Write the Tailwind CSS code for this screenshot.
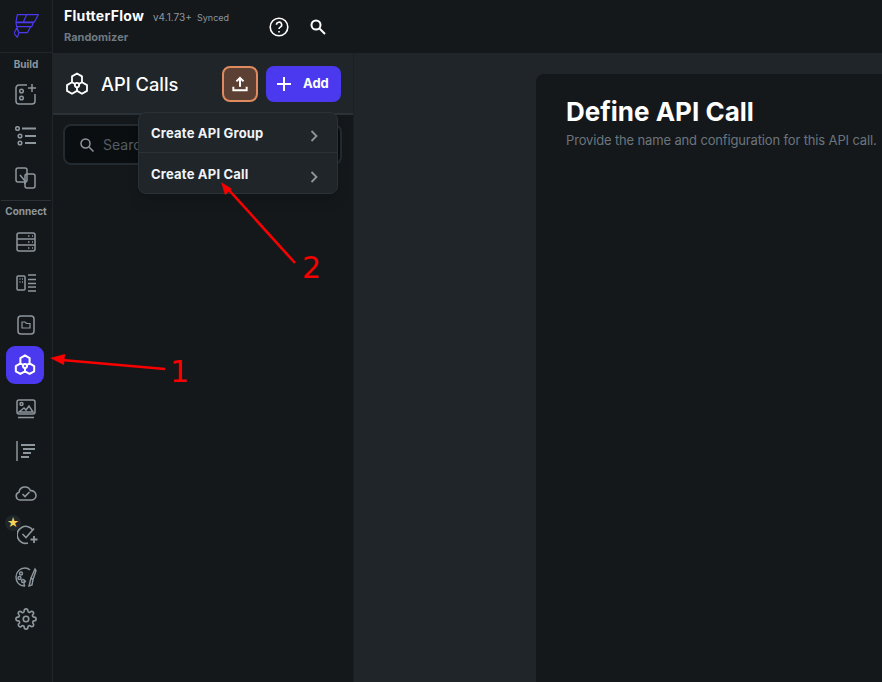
<!DOCTYPE html>
<html lang="en">
<head>
    <meta charset="UTF-8">
    <title>FlutterFlow - API Calls</title>
    <script src="https://cdn.jsdelivr.net/npm/@tailwindcss/browser@4"></script>
</head>
<body class="relative w-[882px] h-[682px] overflow-hidden bg-[#1f2528] text-white font-['Inter','Liberation_Sans',sans-serif]">
    <div class="flex h-full">
        <!-- Icon rail -->
        <aside class="w-[53px] shrink-0 h-full flex flex-col bg-[#14181b] border-r border-[#1f2528] text-[#8d979e]">
            <div class="h-[53px] shrink-0 flex items-center justify-center border-b border-[#1f2528]">
                <svg width="25" height="24" viewBox="42 42 75 72" fill="none" stroke="#4b39ef" stroke-width="3.600" stroke-linejoin="round"><path d="M52 44h28l-10 22H48zM80 44h35l-12 22H70zM48 68h52l-5 12H50zM50 80h42l-10 18H57zM50 85l7 13-5 14-10-12z"/></svg>
            </div>
            <div class="h-[20px] pt-[2px] flex items-center justify-center text-[10px] font-bold">Build</div>
            <div class="h-[42px] flex items-center justify-center">
                <svg width="22" height="22" viewBox="0 0 22 22" fill="none" stroke="currentColor" stroke-width="1.500"><path d="M12 2H4a3 3 0 0 0-3 3v13a3 3 0 0 0 3 3h13a3 3 0 0 0 3-3v-7"/><circle cx="6.500" cy="8" r="1.800"/><circle cx="6.500" cy="15" r="1.800"/><path d="M17 1v8M13 5h8"/></svg>
            </div>
            <div class="h-[42px] flex items-center justify-center">
                <svg width="22" height="20" viewBox="0 0 22 20" fill="none" stroke="currentColor" stroke-width="1.500"><circle cx="2.500" cy="2.500" r="1.800"/><circle cx="5" cy="10" r="1.800"/><circle cx="5" cy="17" r="1.800"/><path d="M7 2.500h14M10 10h11M10 17h11" stroke-width="2"/></svg>
            </div>
            <div class="h-[42px] flex items-center justify-center">
                <svg width="22" height="22" viewBox="0 0 22 22" fill="none" stroke="currentColor" stroke-width="1.500"><rect x="1" y="1" width="11" height="14" rx="2"/><rect x="10" y="7" width="10" height="14" rx="2"/><path d="M5 8l5 6v3"/></svg>
            </div>
            <div class="h-px mt-px mx-px bg-[#2a3238]"></div>
            <div class="h-[21px] flex items-center justify-center text-[10px] font-bold">Connect</div>
            <div class="h-[41px] mt-[-1px] flex items-center justify-center">
                <svg width="20" height="20" viewBox="0 0 20 20" fill="none" stroke="currentColor" stroke-width="1.500"><rect x="1" y="1" width="18" height="18" rx="2"/><path d="M1 7h18M1 13h18"/><path d="M12 4h1.500M16 4h1M12 10h1.500M16 10h1M12 16h1.500M16 16h1"/></svg>
            </div>
            <div class="h-[42px] flex items-center justify-center">
                <svg width="20" height="18" viewBox="0 0 20 18" fill="none" stroke="currentColor" stroke-width="1.500"><rect x="1" y="2" width="8" height="14" rx="1"/><path d="M3.500 5h1M6 5h1M3.500 8h1M6 8h1M12 1h8M12 5.500h8M12 9.500h8M12 13h8M12 17h8"/></svg>
            </div>
            <div class="h-[42px] flex items-center justify-center">
                <svg width="18" height="20" viewBox="0 0 18 20" fill="none" stroke="currentColor" stroke-width="1.500"><rect x="1" y="1" width="16" height="18" rx="3"/><path d="M5 7h3l1.500 1.500H13V13H5z" stroke-width="1.200"/></svg>
            </div>
            <div class="h-[42px] flex items-center justify-center">
                <div class="w-[38px] h-[38px] mr-[2px] mb-[4px] rounded-[9px] bg-[#4b39ef] flex items-center justify-center">
                    <svg width="22" height="22" viewBox="0 0 24 24" fill="none" stroke="white" stroke-width="2.200" stroke-linejoin="round"><path d="M12 1.500l5 2.900v5.800l-5 2.900-5-2.900V4.400zM7 10.200l5 2.900v5.800l-5 2.900-5-2.900v-5.800zM17 10.200l5 2.900v5.800l-5 2.900-5-2.900v-5.800z"/><circle cx="12" cy="13.100" r="2.200" fill="#4b39ef"/></svg>
                </div>
            </div>
            <div class="h-[42px] flex items-center justify-center">
                <svg width="20" height="20" viewBox="0 0 20 20" fill="none" stroke="currentColor" stroke-width="1.500"><rect x="1" y="1" width="18" height="14" rx="2"/><circle cx="5.500" cy="5" r="1.500"/><path d="M3 13l5-4 2 2 3-4 4 6zM2 18.500h16"/></svg>
            </div>
            <div class="h-[42px] flex items-center justify-center">
                <svg width="20" height="20" viewBox="0 0 20 20" fill="none" stroke="currentColor" stroke-width="1.500"><path d="M1 0v20"/><path d="M5 4h14M7 8h12M7 12h8M5 16h8" stroke-width="2"/></svg>
            </div>
            <div class="h-[42px] flex items-center justify-center">
                <svg width="22" height="16" viewBox="0 0 22 16" fill="none" stroke="currentColor" stroke-width="1.600"><path d="M5 15a4 4 0 0 1-1-7.800 6 6 0 0 1 11.500-1.500A4.700 4.700 0 0 1 17 15z"/><path d="M7.500 9l2.500 2.500 4.500-4.500"/></svg>
            </div>
            <div class="relative h-[42px] flex items-center justify-center">
                <div class="absolute left-[5px] top-[1px] w-[16px] h-[16px] rounded-full bg-[#1f2528] flex items-center justify-center text-[12px] leading-none text-[#f9cf58]">★</div>
                <svg class="ml-[2px]" width="21" height="20" viewBox="0 0 21 20" fill="none" stroke="currentColor" stroke-width="1.600"><path d="M16 5.500A8.500 8.500 0 1 0 11 18"/><path d="M5.500 9l3.500 3.500L17 3.500"/><path d="M17 11v7M13.500 14.500h7" stroke-width="1.800"/></svg>
            </div>
            <div class="h-[42px] flex items-center justify-center">
                <svg width="22" height="22" viewBox="0 0 22 22" fill="none" stroke="currentColor" stroke-width="1.400"><path d="M10 20C4 20 1 16 1 11S5 2 10 2c2.500 0 4 1 5 2"/><path d="M10 20c-2-2-1-4 1-5"/><circle cx="6" cy="7.500" r="1.500"/><circle cx="4.500" cy="12" r="1.500"/><circle cx="8" cy="15" r="1.500"/><path d="M20 3l-4 9 2 1.500 3-9zM16 12l-1 4-1 4 3-1 1-5.500"/></svg>
            </div>
            <div class="h-[42px] flex items-center justify-center">
                <svg width="22" height="22" viewBox="0 0 24 24" fill="none" stroke="currentColor" stroke-width="1.800"><circle cx="12" cy="12" r="3"/><path d="M19.400 15a1.650 1.650 0 0 0 .33 1.820l.06.06a2 2 0 1 1-2.830 2.830l-.06-.06a1.650 1.650 0 0 0-2.820 1.170V21a2 2 0 0 1-4 0v-.09a1.650 1.650 0 0 0-2.900-1.100l-.06.06a2 2 0 1 1-2.830-2.830l.06-.06A1.650 1.650 0 0 0 3.090 14H3a2 2 0 0 1 0-4h.09a1.650 1.650 0 0 0 1.100-2.900l-.06-.06A2 2 0 1 1 6.960 4.210l.06.06A1.650 1.650 0 0 0 10 3.090V3a2 2 0 0 1 4 0v.09a1.650 1.650 0 0 0 2.820 1.170l.06-.06a2 2 0 1 1 2.830 2.830l-.06.06A1.650 1.650 0 0 0 20.910 10H21a2 2 0 0 1 0 4h-.09a1.650 1.650 0 0 0-1.510 1z"/></svg>
            </div>
        </aside>

        <div class="flex-1 min-w-0 flex flex-col">
            <!-- Top bar -->
            <header class="h-[53px] shrink-0 bg-[#14181b] flex items-center pl-[11px]">
                <div class="w-[205px] shrink-0">
                    <div class="flex items-baseline h-[20px] -mt-[3px]">
                        <span class="w-[89px] text-[14px] tracking-[0.3px] font-bold">FlutterFlow</span>
                        <span class="w-[44px] text-[10px] text-[#8d979e]">v4.1.73+</span>
                        <span class="text-[9px] text-[#8d979e]">Synced</span>
                    </div>
                    <div class="mt-[4px] text-[11px] font-bold text-[#6f7a82]">Randomizer</div>
                </div>
                <svg width="20" height="20" viewBox="0 0 20 20" fill="none" stroke="white" stroke-width="1.600"><circle cx="10" cy="10" r="8.800"/><path d="M7.500 7.800a2.600 2.600 0 1 1 3.800 2.300c-.9.500-1.300 1-1.300 2"/><path d="M10 14v1.500"/></svg>
                <svg class="ml-[20px]" width="18" height="18" viewBox="0 0 18 18" fill="none" stroke="white" stroke-width="2"><circle cx="7" cy="7" r="4.500"/><path d="M10.500 10.500L16 16"/></svg>
            </header>

            <div class="flex-1 min-h-0 flex">
                <!-- API Calls panel -->
                <section class="relative w-[301px] shrink-0 bg-[#14181b] border-r border-[#1a2024]">
                    <div class="h-[62px] pt-[2px] bg-[#1f2528] border-b-2 border-[#2a3238] flex items-center pl-[12px] pr-[12px]">
                        <svg width="24" height="24" viewBox="0 0 24 24" fill="none" stroke="white" stroke-width="1.800" stroke-linejoin="round"><path d="M12 1.500l5 2.900v5.800l-5 2.900-5-2.900V4.400zM7 10.200l5 2.900v5.800l-5 2.900-5-2.900v-5.800zM17 10.200l5 2.900v5.800l-5 2.900-5-2.900v-5.800z"/><circle cx="12" cy="13.100" r="2.200" fill="#1f2528"/></svg>
                        <h2 class="ml-[12px] mt-px text-[18.300px] font-medium">API Calls</h2>
                        <button class="ml-auto w-[36px] h-[36px] rounded-lg bg-[#5c4033] border-2 border-[#e08a5f] flex items-center justify-center">
                            <svg width="16" height="16" viewBox="0 0 18 18" fill="none" stroke="white" stroke-width="2.200"><path d="M9 12V2M5 6l4-4 4 4M1.500 12v4h15v-4"/></svg>
                        </button>
                        <button class="ml-[8px] w-[75px] h-[36px] rounded-lg bg-[#4b39ef] flex items-center pl-[11px] text-[13px] font-bold">
                            <svg width="14" height="14" viewBox="0 0 14 14" stroke="white" stroke-width="2"><path d="M7 0v14M0 7h14"/></svg>
                            <span class="ml-[12px]">Add</span>
                        </button>
                    </div>
                    <div class="mt-[9px] ml-[10px] mr-[11px] h-[41px] bg-[#0b0e10] border-2 border-[#232b30] rounded-lg flex items-center pl-[15px] text-[14px] text-[#525c63]">
                        <svg width="14" height="14" viewBox="0 0 14 14" fill="none" stroke="#8d979e" stroke-width="1.500"><circle cx="5.500" cy="5.500" r="4.500"/><path d="M9 9l4.500 4.500"/></svg>
                        <span class="ml-[9px]">Search</span>
                    </div>
                    <!-- Dropdown -->
                    <div class="absolute left-[85px] top-[59px] w-[200px] h-[82px] bg-[#1f2528] border border-[#2a3238] rounded-lg text-[13px] tracking-[0.2px] font-bold text-[#f1f4f8] shadow-lg">
                        <div class="h-[40px] pt-[2px] flex items-center justify-between pl-[12px] pr-[19px] border-b border-[#2a3238]">
                            <span>Create API Group</span>
                            <svg class="mt-[4px]" width="8" height="12" viewBox="0 0 8 12" fill="none" stroke="#8d979e" stroke-width="1.800"><path d="M1.500 1l5 5-5 5"/></svg>
                        </div>
                        <div class="h-[40px] pt-[3px] flex items-center justify-between pl-[12px] pr-[19px]">
                            <span>Create API Call</span>
                            <svg class="mt-[4px]" width="8" height="12" viewBox="0 0 8 12" fill="none" stroke="#8d979e" stroke-width="1.800"><path d="M1.500 1l5 5-5 5"/></svg>
                        </div>
                    </div>
                </section>

                <!-- Main -->
                <main class="flex-1 min-w-0 pt-[21px] pl-[182px]">
                    <div class="h-full bg-[#14181b] rounded-tl-lg pl-[30px] pt-[21px]">
                        <h1 class="text-[26px] leading-[34px] font-bold">Define API Call</h1>
                        <p class="mt-[2px] text-[13px] tracking-[-0.15px] text-[#6b757d] whitespace-nowrap">Provide the name and configuration for this API call.</p>
                    </div>
                </main>
            </div>
        </div>
    </div>

    <!-- Annotations -->
    <svg class="absolute inset-0 pointer-events-none" width="882" height="682" fill="none">
        <path d="M165 369L62 360" stroke="#f80000" stroke-width="2.600"/>
        <path d="M50 358l15-4-1 11z" fill="#f80000"/>
        <path d="M295 263L228 189" stroke="#f80000" stroke-width="2.600"/>
        <path d="M221 182l11 7-7 6z" fill="#f80000"/>
    </svg>
    <span class="absolute left-[170px] top-[354px] text-[30px] leading-[36px] text-[#f80000] font-['DejaVu_Sans',sans-serif]">1</span>
    <span class="absolute left-[302px] top-[250px] text-[30px] leading-[36px] text-[#f80000] font-['DejaVu_Sans',sans-serif]">2</span>
</body>
</html>
